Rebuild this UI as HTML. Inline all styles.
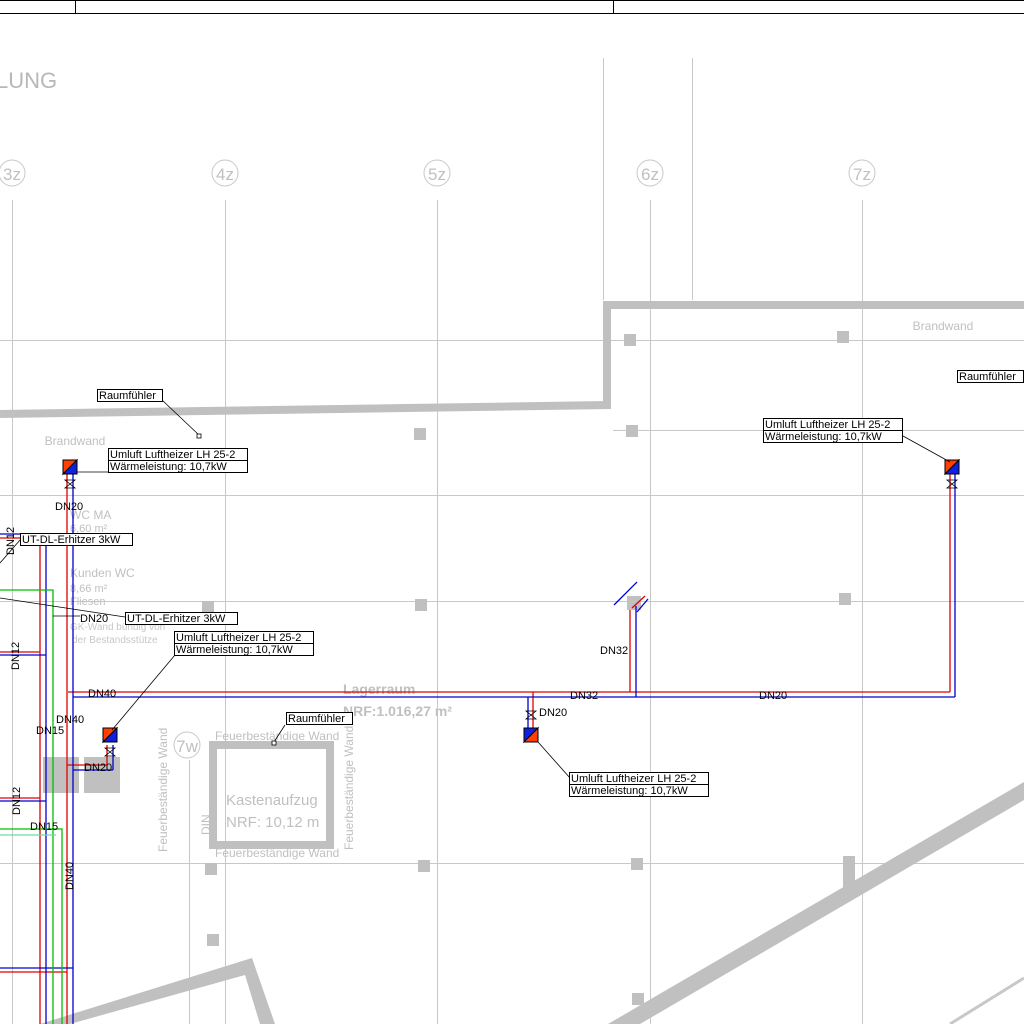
<!DOCTYPE html>
<html><head><meta charset="utf-8"><style>
html,body{margin:0;padding:0;background:#fff;}
svg{display:block;}
text{font-family:"Liberation Sans",sans-serif;}
.g{fill:#c0c0c0;}
.lbl{font-size:11px;fill:#000;}
.gt{fill:#c0c0c0;font-size:12px;}
</style></head><body>
<svg width="1024" height="1024" viewBox="0 0 1024 1024" xmlns="http://www.w3.org/2000/svg">
<rect width="1024" height="1024" fill="#fff"/>
<!-- top frame -->
<g stroke="#000" stroke-width="1">
<line x1="0" y1="0.5" x2="1024" y2="0.5"/>
<line x1="0" y1="13.5" x2="1024" y2="13.5"/>
<line x1="75.5" y1="0" x2="75.5" y2="13"/>
<line x1="613.5" y1="0" x2="613.5" y2="13"/>
</g>
<text x="-4" y="88" fill="#b8b8b8" font-size="22">LUNG</text>
<!-- grid -->
<g stroke="#c8c8c8" stroke-width="1" fill="none">
<line x1="12.5" y1="200" x2="12.5" y2="1024"/>
<line x1="225.5" y1="200" x2="225.5" y2="1024"/>
<line x1="437.5" y1="200" x2="437.5" y2="1024"/>
<line x1="650.5" y1="200" x2="650.5" y2="1024"/>
<line x1="862.5" y1="200" x2="862.5" y2="1024"/>
<line x1="0" y1="340.5" x2="1024" y2="340.5"/>
<line x1="613" y1="430.5" x2="1024" y2="430.5"/>
<line x1="0" y1="495.5" x2="1024" y2="495.5"/>
<line x1="0" y1="601.5" x2="1024" y2="601.5"/>
<line x1="0" y1="863.5" x2="1024" y2="863.5"/>
<line x1="189.5" y1="760" x2="189.5" y2="1024"/>
<line x1="603.5" y1="58" x2="603.5" y2="300"/>
<line x1="692.5" y1="58" x2="692.5" y2="300"/>
<circle cx="12" cy="173" r="13"/><circle cx="225" cy="173" r="13"/><circle cx="437" cy="173" r="13"/><circle cx="650" cy="173" r="13"/><circle cx="862" cy="173" r="13"/>
<circle cx="187" cy="745" r="13"/>
</g>
<g fill="#c0c0c0" font-size="17" text-anchor="middle">
<text x="12" y="180">3z</text><text x="225" y="180">4z</text><text x="437" y="180">5z</text><text x="650" y="180">6z</text><text x="862" y="180">7z</text><text x="187" y="752">7w</text>
</g>
<!-- walls -->
<g stroke="#c0c0c0" stroke-width="8" fill="none">
<polyline points="0,414 607,405 607,305 1024,305"/>
</g>
<polygon points="608,1024 1024,782 1024,800 640,1024" class="g"/>
<line x1="950" y1="1024" x2="1024" y2="978" stroke="#c8c8c8" stroke-width="3"/>
<polygon points="40,1024 252,958 275,1024 260,1024 245,975 70,1024" class="g"/>
<rect x="213" y="745" width="117" height="100" fill="none" stroke="#c0c0c0" stroke-width="8"/>
<g class="g">
<rect x="624" y="334" width="12" height="12"/><rect x="837" y="331" width="12" height="12"/>
<rect x="414" y="428" width="12" height="12"/><rect x="626" y="425" width="12" height="12"/>
<rect x="415" y="599" width="12" height="12"/><rect x="839" y="593" width="12" height="12"/>
<rect x="202" y="601" width="12" height="12"/><rect x="418" y="860" width="12" height="12"/>
<rect x="631" y="858" width="12" height="12"/><rect x="205" y="863" width="12" height="12"/>
<rect x="207" y="934" width="12" height="12"/><rect x="632" y="993" width="12" height="12"/>
<rect x="843" y="856" width="12" height="34"/><rect x="627" y="596" width="14" height="14"/>
<rect x="43" y="757" width="36" height="36"/><rect x="84" y="757" width="36" height="36"/>
</g>
<!-- gray texts -->
<text x="943" y="330" class="gt" text-anchor="middle">Brandwand</text>
<text x="75" y="445" class="gt" text-anchor="middle">Brandwand</text>
<text x="70" y="519" fill="#c0c0c0" font-size="12">WC MA</text>
<text x="70" y="532" fill="#c0c0c0" font-size="11">6,60 m²</text>
<text x="70" y="577" fill="#c0c0c0" font-size="12">Kunden WC</text>
<text x="70" y="592" fill="#c0c0c0" font-size="11">8,66 m²</text>
<text x="70" y="605" fill="#c0c0c0" font-size="11">Fliesen</text>
<text x="70" y="630" fill="#c8c8c8" font-size="10">GK-Wand bündig von</text>
<text x="72" y="643" fill="#c8c8c8" font-size="10">der Bestandsstütze</text>
<text x="343" y="694" fill="#c0c0c0" font-size="14" font-weight="bold">Lagerraum</text>
<text x="343" y="716" fill="#c0c0c0" font-size="14" font-weight="bold">NRF:1.016,27 m²</text>
<text x="215" y="740" fill="#c0c0c0" font-size="12">Feuerbeständige Wand</text>
<text x="215" y="857" fill="#c0c0c0" font-size="12">Feuerbeständige Wand</text>
<text x="226" y="805" fill="#c0c0c0" font-size="15">Kastenaufzug</text>
<text x="226" y="827" fill="#c0c0c0" font-size="15">NRF: 10,12 m</text>
<text transform="translate(167,852) rotate(-90)" fill="#c0c0c0" font-size="12">Feuerbeständige Wand</text>
<text transform="translate(353,850) rotate(-90)" fill="#c0c0c0" font-size="12">Feuerbeständige Wand</text>
<text transform="translate(210,835) rotate(-90)" fill="#c0c0c0" font-size="12">DIN</text>
<!-- pipes -->
<g fill="none" stroke-width="1.3">
<g stroke="#e00000">
<line x1="40" y1="540" x2="40" y2="1024"/><line x1="67" y1="470" x2="67" y2="1024"/>
<line x1="68" y1="692" x2="950" y2="692"/><line x1="950" y1="472" x2="950" y2="692"/>
<line x1="630" y1="610" x2="630" y2="692"/><line x1="533" y1="692" x2="533" y2="735"/>
<line x1="0" y1="652" x2="40" y2="652"/><line x1="0" y1="798" x2="40" y2="798"/><line x1="0" y1="972" x2="67" y2="972"/>
<line x1="67" y1="765" x2="107" y2="765"/><line x1="107" y1="745" x2="107" y2="765"/>
<line x1="0" y1="538" x2="20" y2="538"/>
</g>
<g stroke="#0000d0">
<line x1="46" y1="540" x2="46" y2="1024"/><line x1="73" y1="470" x2="73" y2="1024"/>
<line x1="73" y1="697" x2="955" y2="697"/><line x1="955" y1="472" x2="955" y2="697"/>
<line x1="636" y1="606" x2="636" y2="697"/><line x1="528" y1="697" x2="528" y2="735"/>
<line x1="0" y1="655" x2="46" y2="655"/><line x1="0" y1="801" x2="46" y2="801"/><line x1="0" y1="968" x2="73" y2="968"/>
<line x1="73" y1="770" x2="113" y2="770"/><line x1="113" y1="745" x2="113" y2="770"/>
<line x1="0" y1="534" x2="20" y2="534"/>
<line x1="614" y1="605" x2="637" y2="582"/><line x1="637" y1="612" x2="648" y2="599"/>
</g>
<g stroke="#00c000">
<polyline points="0,590 53,590 53,1024"/><polyline points="0,829 62,829 62,1024"/>
</g>
<g stroke="#60e0a0"><line x1="0" y1="835" x2="56" y2="835"/></g>
<line x1="632" y1="608" x2="645" y2="596" stroke="#e00000"/>
</g>
<!-- heaters -->
<g stroke="#000" stroke-width="1">
<polygon points="63,460 77,460 63,474" fill="#ff4000"/><polygon points="77,460 77,474 63,474" fill="#1020e0"/>
<polygon points="945,460 959,460 945,474" fill="#ff4000"/><polygon points="959,460 959,474 945,474" fill="#1020e0"/>
<polygon points="103,728 117,728 103,742" fill="#ff4000"/><polygon points="117,728 117,742 103,742" fill="#1020e0"/>
<polygon points="524,728 538,728 524,742" fill="#1020e0"/><polygon points="538,728 538,742 524,742" fill="#ff4000"/>
</g>
<g stroke="#000" stroke-width="0.8" fill="none">
<path d="M65,480h10l-10,8h10z"/><path d="M947,480h10l-10,8h10z"/><path d="M105,748h10l-10,8h10z"/><path d="M526,711h10l-10,8h10z"/>
<!-- leaders -->
<line x1="77" y1="472" x2="108" y2="472"/><line x1="903" y1="436" x2="950" y2="462"/>
<line x1="175" y1="655" x2="112" y2="730"/><line x1="538" y1="742" x2="570" y2="778"/>
<line x1="162" y1="400" x2="200" y2="436"/><line x1="285" y1="725" x2="274" y2="742"/>
<line x1="0" y1="598" x2="125" y2="617"/><line x1="0" y1="563" x2="20" y2="540"/>
<line x1="53" y1="616" x2="80" y2="616"/>
</g>
<rect x="197" y="434" width="4" height="4" fill="#fff" stroke="#000" stroke-width="0.8"/>
<rect x="272" y="741" width="4" height="4" fill="#fff" stroke="#000" stroke-width="0.8"/>
<!-- label boxes -->
<g fill="#fff" stroke="#000" stroke-width="1">
<rect x="97.5" y="389.5" width="65" height="12"/>
<rect x="957.5" y="370.5" width="66" height="12"/>
<rect x="108.5" y="448.5" width="139" height="12"/><rect x="108.5" y="460.5" width="139" height="12"/>
<rect x="763.5" y="418.5" width="139" height="12"/><rect x="763.5" y="430.5" width="139" height="12"/>
<rect x="174.5" y="631.5" width="139" height="12"/><rect x="174.5" y="643.5" width="139" height="12"/>
<rect x="569.5" y="772.5" width="139" height="12"/><rect x="569.5" y="784.5" width="139" height="12"/>
<rect x="20.5" y="533.5" width="112" height="12"/>
<rect x="125.5" y="612.5" width="112" height="12"/>
<rect x="286.5" y="712.5" width="66" height="12"/>
</g>
<g class="lbl">
<text x="99" y="399">Raumfühler</text>
<text x="959" y="380">Raumfühler</text>
<text x="288" y="722">Raumfühler</text>
<text x="110" y="458">Umluft Luftheizer LH 25-2</text><text x="110" y="470">Wärmeleistung: 10,7kW</text>
<text x="765" y="428">Umluft Luftheizer LH 25-2</text><text x="765" y="440">Wärmeleistung: 10,7kW</text>
<text x="176" y="641">Umluft Luftheizer LH 25-2</text><text x="176" y="653">Wärmeleistung: 10,7kW</text>
<text x="571" y="782">Umluft Luftheizer LH 25-2</text><text x="571" y="794">Wärmeleistung: 10,7kW</text>
<text x="22" y="543">UT-DL-Erhitzer 3kW</text>
<text x="127" y="622">UT-DL-Erhitzer 3kW</text>
<text x="55" y="510">DN20</text>
<text x="80" y="622">DN20</text>
<text x="88" y="697">DN40</text>
<text x="56" y="723">DN40</text>
<text x="36" y="734">DN15</text>
<text x="84" y="771">DN20</text>
<text x="30" y="830">DN15</text>
<text x="570" y="699">DN32</text>
<text x="600" y="654">DN32</text>
<text x="539" y="716">DN20</text>
<text x="759" y="699">DN20</text>
<text transform="translate(14,555) rotate(-90)">DN12</text>
<text transform="translate(19,670) rotate(-90)">DN12</text>
<text transform="translate(20,815) rotate(-90)">DN12</text>
<text transform="translate(73,890) rotate(-90)">DN40</text>
</g>
</svg>
</body></html>
